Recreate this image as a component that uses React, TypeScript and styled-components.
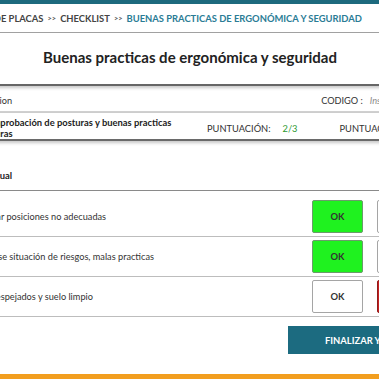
import React from "react";
import styled, { createGlobalStyle } from "styled-components";

const GlobalStyle = createGlobalStyle`
  html, body {
    margin: 0;
    padding: 0;
    background: #ffffff;
  }
  body {
    font-family: Lato, "Open Sans", "Liberation Sans", sans-serif;
    color: #333333;
  }
`;

const Frame = styled.div`
  width: 100%;
  height: 379px;
  overflow: hidden;
  background: #ffffff;
`;

// the 379px window shows the middle of a wider page
const Sheet = styled.div`
  width: 600px;
  margin-left: -110px;
`;

const TopBar = styled.div`
  height: 4px;
  background: #1d6a7e;
`;

const Breadcrumb = styled.nav`
  height: 28px;
  display: flex;
  align-items: center;
  gap: 4px;
  padding-left: 61px;
  border-bottom: 1px solid #a3a3a3;
  font-size: 9.4px;
  font-weight: 700;
  text-transform: uppercase;
  white-space: nowrap;
`;

const Crumb = styled.span<{ $current?: boolean }>`
  color: ${({ $current }) => ($current ? "#2a7c95" : "#444444")};
`;

const Sep = styled.span`
  font-size: 7.5px;
  color: #555555;
`;

const TitleBar = styled.header`
  height: 51px;
  display: flex;
  align-items: center;
  justify-content: center;
  border-bottom: 2px solid #666666;
  box-shadow: 0 2px 3px rgba(0, 0, 0, 0.22);
`;

const Title = styled.h1`
  margin: 0 0 3px;
  font-size: 15px;
  font-weight: 700;
  color: #222222;
`;

const Section = styled.div`
  padding: 0 62px 0 91px;
`;

const MetaRow = styled(Section)`
  height: 27px;
  padding-top: 3px;
  box-sizing: border-box;
  display: flex;
  align-items: center;
  justify-content: space-between;
  border-bottom: 2px solid #d0d0d0;
  font-size: 9.2px;
`;

const Code = styled.span`
  display: flex;
  gap: 7px;
  margin-right: 18px;
  color: #333333;
`;

const CodeValue = styled.em`
  color: #8a8a8a;
`;

const ScoreRow = styled(Section)`
  height: 26px;
  display: grid;
  grid-template-columns: 200px auto;
  column-gap: 26px;
  align-items: center;
  border-bottom: 2px solid #6a6a6a;
  box-shadow: 0 2px 3px rgba(0, 0, 0, 0.22);
  font-size: 9.3px;
`;

const GroupName = styled.div`
  font-size: 9.4px;
  font-weight: 700;
  line-height: 11px;
  padding-top: 4px;
  color: #222222;
`;

const Scores = styled.div`
  display: flex;
  gap: 42px;
  white-space: nowrap;
  padding-top: 4px;
`;

const Score = styled.span`
  display: flex;
  gap: 12px;
  text-transform: uppercase;
`;

const ScoreValue = styled.span`
  color: #2e9a32;
`;

const SubHeader = styled(Section)`
  padding-top: 28px;
  padding-bottom: 7px;
  line-height: 14px;
  font-size: 9.4px;
  font-weight: 700;
  color: #222222;
  border-bottom: 1px solid #8a8a8a;
`;

const List = styled.div`
  padding-top: 6px;
`;

const Item = styled(Section)`
  display: flex;
  align-items: center;
  justify-content: space-between;
  padding-top: 3px;
  padding-bottom: 3px;
  border-bottom: 1px solid #bdbdbd;
  font-size: 9.2px;
  white-space: nowrap;
`;

const Actions = styled.div`
  display: flex;
  gap: 14px;
`;

type State = "ok" | "nok" | "idle";

const StatusButton = styled.button<{ $state: State }>`
  width: 51px;
  height: 33px;
  border-radius: 2px;
  font-family: inherit;
  font-size: 9.4px;
  font-weight: 700;
  color: #333333;
  border: 1px solid
    ${({ $state }) =>
      $state === "ok" ? "#6b9b6b" : $state === "nok" ? "#8e1c1c" : "#a5a5a5"};
  background: ${({ $state }) =>
    $state === "ok" ? "#1ff21f" : $state === "nok" ? "#c62020" : "#ffffff"};
`;

const Footer = styled(Section)`
  display: flex;
  justify-content: flex-end;
  padding-top: 9px;
  padding-bottom: 20px;
`;

const Finish = styled.button`
  width: 202px;
  height: 28px;
  border: none;
  padding: 0 0 0 37px;
  text-align: left;
  background: #1c6b80;
  color: #ffffff;
  font-family: inherit;
  font-size: 9.4px;
  font-weight: 700;
  text-transform: uppercase;
  margin-right: -62px;
`;

const BottomBar = styled.div`
  height: 6px;
  background: #f29e1f;
`;

const items: { label: string; ok: State; nok: State }[] = [
  { label: "Evitar posiciones no adecuadas", ok: "ok", nok: "idle" },
  { label: "Revise situación de riesgos, malas practicas", ok: "ok", nok: "idle" },
  { label: "O despejados y suelo limpio", ok: "idle", nok: "nok" },
];

export default function App() {
  return (
    <Frame>
      <GlobalStyle />
      <Sheet>
        <TopBar />
        <Breadcrumb>
          <Crumb>Gestión de placas</Crumb>
          <Sep>&gt;&gt;</Sep>
          <Crumb>Checklist</Crumb>
          <Sep>&gt;&gt;</Sep>
          <Crumb $current>Buenas practicas de ergonómica y seguridad</Crumb>
        </Breadcrumb>
        <TitleBar>
          <Title>Buenas practicas de ergonómica y seguridad</Title>
        </TitleBar>
        <MetaRow>
          <span>Seccion</span>
          <Code>
            <span>CODIGO :</span>
            <CodeValue>Inspección</CodeValue>
          </Code>
        </MetaRow>
        <ScoreRow>
          <GroupName>Comprobación de posturas y buenas practicas seguras</GroupName>
          <Scores>
            <Score>
              Puntuación:
              <ScoreValue>2/3</ScoreValue>
            </Score>
            <Score>
              Puntuación máxima:
              <ScoreValue>3</ScoreValue>
            </Score>
          </Scores>
        </ScoreRow>
        <SubHeader>Manual</SubHeader>
        <List>
          {items.map((item) => (
            <Item key={item.label}>
              <span>{item.label}</span>
              <Actions>
                <StatusButton $state={item.ok}>OK</StatusButton>
                <StatusButton $state={item.nok}>NOK</StatusButton>
              </Actions>
            </Item>
          ))}
        </List>
        <Footer>
          <Finish>Finalizar y guardar</Finish>
        </Footer>
        <BottomBar />
      </Sheet>
    </Frame>
  );
}
